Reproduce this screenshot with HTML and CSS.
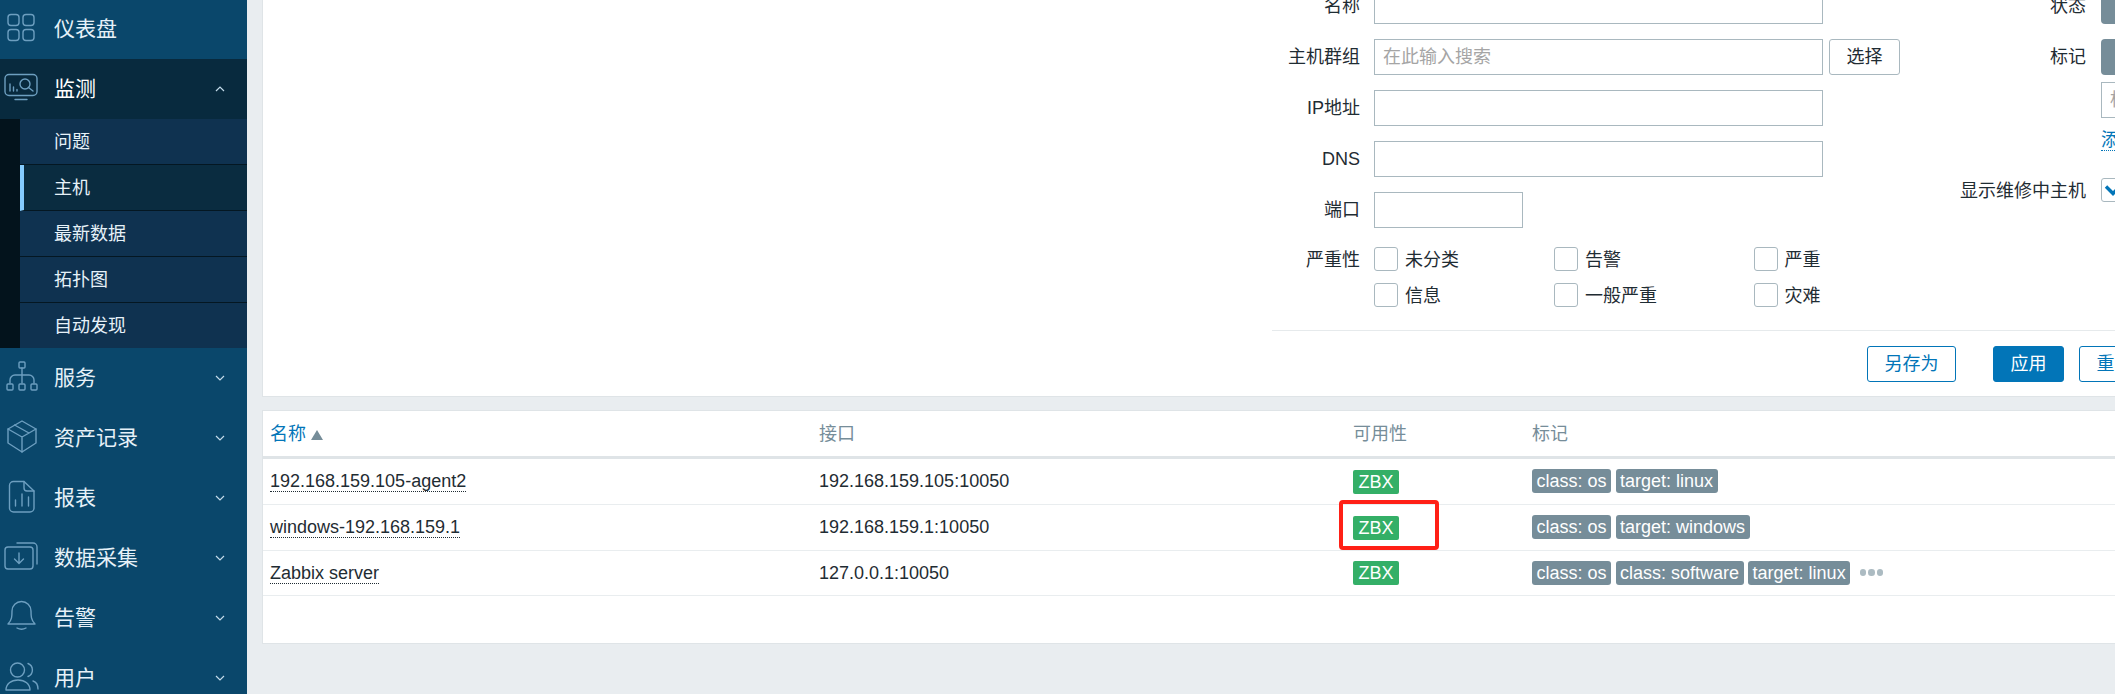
FILE: index.html
```html
<!DOCTYPE html>
<html lang="zh">
<head>
<meta charset="utf-8">
<title>主机</title>
<link rel="stylesheet" href="styles.css">
</head>
<body>
<aside class="sidebar">
  <a class="nav-row"><svg class="nav-icon" viewBox="0 0 44 44"><rect x="8" y="7.5" width="11" height="11" rx="3"/><rect x="23" y="7.5" width="11" height="11" rx="3"/><rect x="8" y="22.5" width="11" height="11" rx="3"/><rect x="23" y="22.5" width="11" height="11" rx="3"/></svg><span>仪表盘</span></a>
  <a class="nav-row nav-open"><svg class="nav-icon" viewBox="0 0 44 44"><rect x="5" y="7.5" width="32" height="21" rx="4"/><path d="M15 32.5H27M10 17V24M13.5 20V24M17 22.5V24"/><circle cx="25" cy="17" r="5"/><path d="M28.5 20.5L33 24"/></svg><span>监测</span><svg class="chev" viewBox="0 0 10 6"><path d="M1 5L5 1L9 5"/></svg></a>
  <div class="subnav">
    <a class="sub-row">问题</a>
    <a class="sub-row sub-active">主机</a>
    <a class="sub-row">最新数据</a>
    <a class="sub-row">拓扑图</a>
    <a class="sub-row">自动发现</a>
  </div>
  <a class="nav-row"><svg class="nav-icon" viewBox="0 0 44 44"><rect x="19" y="6" width="6" height="6" rx="1"/><path d="M22 12V27M10 27V24A5 5 0 0 1 15 19H29A5 5 0 0 1 34 24V27"/><rect x="7" y="28" width="6" height="6" rx="1"/><rect x="19" y="28" width="6" height="6" rx="1"/><rect x="31" y="28" width="6" height="6" rx="1"/></svg><span>服务</span><svg class="chev" viewBox="0 0 10 6"><path d="M1 1L5 5L9 1"/></svg></a>
  <a class="nav-row"><svg class="nav-icon" viewBox="0 0 44 44"><path d="M22 5L36 13V27L22 36L8 27V13Z"/><path d="M8 13L22 21L36 13M22 21V36M14.5 9L29 17"/></svg><span>资产记录</span><svg class="chev" viewBox="0 0 10 6"><path d="M1 1L5 5L9 1"/></svg></a>
  <a class="nav-row"><svg class="nav-icon" viewBox="0 0 44 44"><path d="M13.5 5.5H24L34 15V32A4 4 0 0 1 30 36H13.5A4 4 0 0 1 9.5 32V9.5A4 4 0 0 1 13.5 5.5Z"/><path d="M24 5.5V12A3 3 0 0 0 27 15H34M15.5 24V30M22 18V30M28.5 21V30"/></svg><span>报表</span><svg class="chev" viewBox="0 0 10 6"><path d="M1 1L5 5L9 1"/></svg></a>
  <a class="nav-row"><svg class="nav-icon" viewBox="0 0 44 44"><rect x="5" y="11" width="28" height="22" rx="3"/><path d="M17 7H33A4 4 0 0 1 37 11V28M19 17V27M14.5 23L19 27.5L23.5 23"/></svg><span>数据采集</span><svg class="chev" viewBox="0 0 10 6"><path d="M1 1L5 5L9 1"/></svg></a>
  <a class="nav-row"><svg class="nav-icon" viewBox="0 0 44 44"><path d="M8 28C12 24 12 20 12 15A9.5 9.5 0 0 1 31 15C31 20 31 24 35 28Z"/><path d="M17 32Q21.5 34.5 26 32"/></svg><span>告警</span><svg class="chev" viewBox="0 0 10 6"><path d="M1 1L5 5L9 1"/></svg></a>
  <a class="nav-row"><svg class="nav-icon" viewBox="0 0 44 44"><circle cx="17.5" cy="14" r="7"/><path d="M28 7.5A7 7 0 0 1 28 20.5M6 34C6 28 11 24 18 24S30 28 30 34ZM33 25C36 26 38 29 38 33"/></svg><span>用户</span><svg class="chev" viewBox="0 0 10 6"><path d="M1 1L5 5L9 1"/></svg></a>
</aside>

<main class="content">
  <section class="panel filter">
    <div class="filter-cols">
      <div class="form-col form-left">
        <label class="form-label">名称</label>
        <div class="field"><input class="input input-wide" type="text"></div>
        <label class="form-label">主机群组</label>
        <div class="field"><input class="input input-wide" type="text" placeholder="在此输入搜索"><button class="btn-plain">选择</button></div>
        <label class="form-label">IP地址</label>
        <div class="field"><input class="input input-wide" type="text"></div>
        <label class="form-label">DNS</label>
        <div class="field"><input class="input input-wide" type="text"></div>
        <label class="form-label">端口</label>
        <div class="field"><input class="input input-port" type="text"></div>
        <label class="form-label label-check">严重性</label>
        <div class="checks">
          <span class="check"><i class="box"></i>未分类</span>
          <span class="check"><i class="box"></i>告警</span>
          <span class="check"><i class="box"></i>严重</span>
          <span class="check"><i class="box"></i>信息</span>
          <span class="check"><i class="box"></i>一般严重</span>
          <span class="check"><i class="box"></i>灾难</span>
        </div>
      </div>
      <div class="form-col form-right">
        <label class="form-label">状态</label>
        <div class="field"><span class="segment"></span></div>
        <label class="form-label">标记</label>
        <div class="tag-stack">
          <span class="segment"></span>
          <input class="input input-tag" type="text" placeholder="标记">
          <a class="add-link">添加</a>
        </div>
        <label class="form-label label-maint">显示维修中主机</label>
        <div class="maint"><i class="box box-on"><svg viewBox="0 0 18 12"><path d="M2 2.5L9 9.5L16 2.5"/></svg></i></div>
      </div>
    </div>
    <div class="filter-foot">
      <button class="btn-outline btn-save">另存为</button>
      <button class="btn-solid">应用</button>
      <button class="btn-outline btn-reset">重置</button>
    </div>
  </section>

  <section class="panel results">
    <table class="hosts">
      <colgroup><col class="c-name"><col class="c-iface"><col class="c-avail"><col class="c-tags"></colgroup>
      <thead>
        <tr><th><a class="sort">名称<i class="arrow"></i></a></th><th>接口</th><th>可用性</th><th>标记</th></tr>
      </thead>
      <tbody>
        <tr>
          <td><a class="host">192.168.159.105-agent2</a></td><td>192.168.159.105:10050</td><td><span class="zbx">ZBX</span></td>
          <td><div class="tags"><span class="tag">class: os</span><span class="tag">target: linux</span></div></td>
        </tr>
        <tr>
          <td><a class="host">windows-192.168.159.1</a></td><td>192.168.159.1:10050</td><td><span class="zbx">ZBX</span></td>
          <td><div class="tags"><span class="tag">class: os</span><span class="tag">target: windows</span></div></td>
        </tr>
        <tr class="row-last">
          <td><a class="host">Zabbix server</a></td><td>127.0.0.1:10050</td><td><span class="zbx">ZBX</span></td>
          <td><div class="tags"><span class="tag">class: os</span><span class="tag">class: software</span><span class="tag">target: linux</span><span class="more"><i></i><i></i><i></i></span></div></td>
        </tr>
      </tbody>
    </table>
    <div class="mark"></div>
  </section>
</main>
</body>
</html>
```
FILE: styles.css
```css
* { box-sizing: border-box; }
html, body { margin: 0; height: 694px; overflow: hidden; }
body {
  display: flex;
  background: #e9edf0;
  color: #1f2c33;
  font: 18px/24px "Liberation Sans", "Noto Sans CJK SC", sans-serif;
}
a { text-decoration: none; }

/* Sidebar */
.sidebar {
  flex: 0 0 247px;
  margin-top: -1px;
  background: #0a476b;
  color: #e6f1f8;
}
.nav-row {
  display: flex;
  align-items: center;
  height: 60px;
  font-size: 21px;
}
.nav-open { background: #082a3e; color: #fff; }
.nav-icon {
  flex: 0 0 44px;
  width: 44px;
  height: 44px;
  margin-right: 10px;
  fill: none;
  stroke: #6d9fc0;
  stroke-width: 1.4;
  stroke-linecap: round;
  stroke-linejoin: round;
}
.chev {
  width: 10px;
  height: 6px;
  margin-left: auto;
  margin-right: 22px;
  fill: none;
  stroke: #c3dbea;
  stroke-width: 1.2;
  overflow: visible;
}
.subnav { padding-left: 20px; background: #03131c; }
.sub-row {
  display: flex;
  align-items: center;
  height: 46px;
  padding-left: 34px;
  background: #0f3250;
  border-bottom: 1px solid #041722;
  font-size: 18px;
}
.sub-row:last-child { height: 45px; border-bottom: 0; }
.sub-active {
  padding-left: 30px;
  background: #0a2c40;
  border-left: 4px solid #85ccff;
}

/* Panels */
.content {
  flex: 1 1 0;
  min-width: 0;
  padding-left: 15px;
  overflow: hidden;
}
.panel {
  width: 1861px;
  background: #fff;
  border-bottom: 1px solid #dfe4e7;
}

/* Filter */
.filter {
  margin-top: -12px;
  height: 409px;
  padding-left: 1009px;
  border-left: 1px solid #dfe4e7;
}
.filter-cols { display: flex; height: 342px; }
.form-col {
  display: grid;
  align-content: start;
  column-gap: 14px;
  row-gap: 15px;
}
.form-left { flex: 0 0 688px; grid-template-columns: 88px 1fr; }
.form-right { flex: 0 0 300px; grid-template-columns: 126px 1fr; column-gap: 15px; }
.form-label {
  height: 36px;
  line-height: 36px;
  text-align: right;
  white-space: nowrap;
}
.field { display: flex; gap: 6px; }
.input {
  display: block;
  height: 36px;
  padding: 0 8px;
  background: #fff;
  border: 1px solid #a9b8bf;
  border-radius: 0;
  font: inherit;
  outline: 0;
}
.input::placeholder { color: #a5a5a5; opacity: 1; }
.input-wide { width: 449px; }
.input-port { width: 149px; }
.input-tag { width: 160px; }
.btn-plain {
  width: 71px;
  height: 36px;
  padding: 0;
  background: #fff;
  color: #1f2c33;
  border: 1px solid #a9b8bf;
  border-radius: 3px;
  font: inherit;
}
.label-check { height: 24px; line-height: 27px; margin-top: 4px; }
.checks {
  display: grid;
  grid-template-columns: 180px 199.5px 100px;
  row-gap: 12px;
  margin-top: 4px;
}
.check {
  display: flex;
  align-items: flex-start;
  gap: 7px;
  height: 24px;
  line-height: 27px;
}
.box {
  display: block;
  flex: 0 0 24px;
  width: 24px;
  height: 24px;
  background: #fff;
  border: 1px solid #a9b8bf;
  border-radius: 3px;
}
.segment {
  display: block;
  width: 120px;
  height: 36px;
  background: #768d99;
  border-radius: 4px 0 0 4px;
}
.tag-stack { display: flex; flex-direction: column; height: 112px; }
.tag-stack .input-tag { margin-top: 7px; }
.add-link {
  align-self: flex-start;
  margin-top: 12px;
  color: #0275b8;
  line-height: 20px;
  border-bottom: 1px dotted #0275b8;
}
.label-maint { height: 24px; line-height: 26px; margin-top: 12px; }
.maint { margin-top: 12px; }
.box-on { display: flex; align-items: center; justify-content: center; }
.box-on svg {
  flex: 0 0 18px;
  width: 18px;
  height: 12px;
  fill: none;
  stroke: #0275b8;
  stroke-width: 3.4;
}
.filter-foot {
  display: flex;
  margin-top: 0;
  padding: 15px 0 0 595px;
  border-top: 1px solid #e6eaec;
}
.btn-outline, .btn-solid {
  flex: 0 0 auto;
  height: 36px;
  padding: 0;
  border-radius: 3px;
  font: inherit;
}
.btn-outline {
  width: 89px;
  background: #fff;
  color: #0275b8;
  border: 1px solid #0275b8;
}
.btn-solid {
  width: 71px;
  margin-left: 37px;
  background: #0275b8;
  color: #fff;
  border: 1px solid #0275b8;
}
.btn-reset { width: 71px; margin-left: 15px; }

/* Results */
.results {
  position: relative;
  height: 234px;
  margin-top: 13px;
  border-top: 1px solid #dfe4e7;
  border-left: 1px solid #dfe4e7;
}
.hosts {
  width: 1853px;
  table-layout: fixed;
  border-collapse: separate;
  border-spacing: 0;
}
.c-name { width: 549px; }
.c-iface { width: 534px; }
.c-avail { width: 179px; }
.c-tags { width: 591px; }
.hosts th {
  height: 48px;
  padding: 2px 0 1px 7px;
  color: #768d99;
  font-weight: 400;
  text-align: left;
  border-bottom: 3px solid #dfe4e7;
}
.hosts td {
  height: 46px;
  padding: 0 0 1px 7px;
  border-bottom: 1px solid #e9edef;
}
.row-last td { height: 45px; }
.sort { color: #0275b8; }
.arrow {
  display: inline-block;
  margin-left: 5px;
  border-left: 6px solid transparent;
  border-right: 6px solid transparent;
  border-bottom: 10px solid #768d99;
}
.host { border-bottom: 1px dotted #1f2c33; }
.zbx {
  display: inline-block;
  width: 46px;
  height: 24px;
  background: #34af67;
  color: #fff;
  line-height: 24px;
  text-align: center;
  border-radius: 2px;
  vertical-align: middle;
}
.tags { display: flex; align-items: center; gap: 4.5px; }
.tag {
  height: 24px;
  padding: 0 4.5px;
  background: #768d99;
  color: #fff;
  line-height: 24px;
  border-radius: 3px;
  white-space: nowrap;
}
.more { display: flex; gap: 2px; margin-left: 5px; }
.more i {
  display: block;
  width: 6.5px;
  height: 6.5px;
  background: #acbbc2;
  border-radius: 50%;
}
.mark {
  position: absolute;
  left: 1076px;
  top: 89px;
  width: 100px;
  height: 50px;
  border: 4px solid #ff2016;
  border-radius: 4px;
}
```
